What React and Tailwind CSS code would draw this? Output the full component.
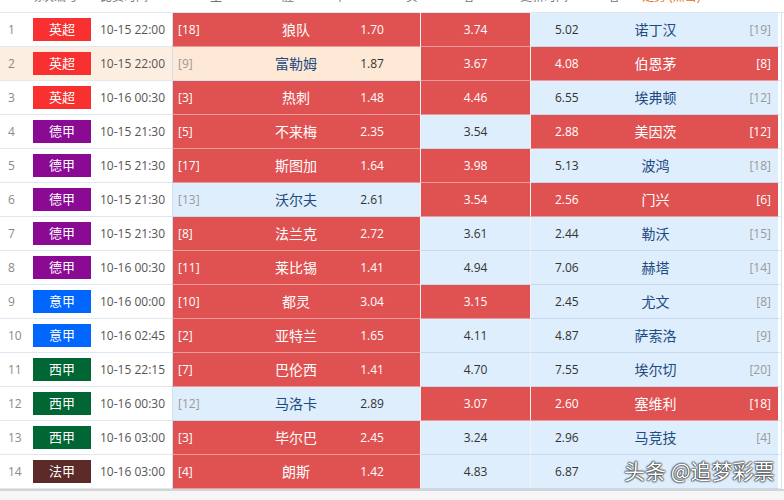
const rows = [
  { n: 1, lg: "英超", lc: "bg-[#f8302f]", t: "10-15 22:00", hr: "[18]", ht: "狼队", ho: "1.70", d: "3.74", ao: "5.02", at: "诺丁汉", ar: "[19]", c: "RRL" },
  { n: 2, lg: "英超", lc: "bg-[#f8302f]", t: "10-15 22:00", hr: "[9]", ht: "富勒姆", ho: "1.87", d: "3.67", ao: "4.08", at: "伯恩茅", ar: "[8]", c: "PRR", hover: true },
  { n: 3, lg: "英超", lc: "bg-[#f8302f]", t: "10-16 00:30", hr: "[3]", ht: "热刺", ho: "1.48", d: "4.46", ao: "6.55", at: "埃弗顿", ar: "[12]", c: "RRL" },
  { n: 4, lg: "德甲", lc: "bg-[#8a0a94]", t: "10-15 21:30", hr: "[5]", ht: "不来梅", ho: "2.35", d: "3.54", ao: "2.88", at: "美因茨", ar: "[12]", c: "RLR" },
  { n: 5, lg: "德甲", lc: "bg-[#8a0a94]", t: "10-15 21:30", hr: "[17]", ht: "斯图加", ho: "1.64", d: "3.98", ao: "5.13", at: "波鸿", ar: "[18]", c: "RRL" },
  { n: 6, lg: "德甲", lc: "bg-[#8a0a94]", t: "10-15 21:30", hr: "[13]", ht: "沃尔夫", ho: "2.61", d: "3.54", ao: "2.56", at: "门兴", ar: "[6]", c: "LRR" },
  { n: 7, lg: "德甲", lc: "bg-[#8a0a94]", t: "10-15 21:30", hr: "[8]", ht: "法兰克", ho: "2.72", d: "3.61", ao: "2.44", at: "勒沃", ar: "[15]", c: "RLL" },
  { n: 8, lg: "德甲", lc: "bg-[#8a0a94]", t: "10-16 00:30", hr: "[11]", ht: "莱比锡", ho: "1.41", d: "4.94", ao: "7.06", at: "赫塔", ar: "[14]", c: "RLL" },
  { n: 9, lg: "意甲", lc: "bg-[#0066fe]", t: "10-16 00:00", hr: "[10]", ht: "都灵", ho: "3.04", d: "3.15", ao: "2.45", at: "尤文", ar: "[8]", c: "RRL" },
  { n: 10, lg: "意甲", lc: "bg-[#0066fe]", t: "10-16 02:45", hr: "[2]", ht: "亚特兰", ho: "1.65", d: "4.11", ao: "4.87", at: "萨索洛", ar: "[9]", c: "RLL" },
  { n: 11, lg: "西甲", lc: "bg-[#006633]", t: "10-15 22:15", hr: "[7]", ht: "巴伦西", ho: "1.41", d: "4.70", ao: "7.55", at: "埃尔切", ar: "[20]", c: "RLL" },
  { n: 12, lg: "西甲", lc: "bg-[#006633]", t: "10-16 00:30", hr: "[12]", ht: "马洛卡", ho: "2.89", d: "3.07", ao: "2.60", at: "塞维利", ar: "[18]", c: "LRR" },
  { n: 13, lg: "西甲", lc: "bg-[#006633]", t: "10-16 03:00", hr: "[3]", ht: "毕尔巴", ho: "2.45", d: "3.24", ao: "2.96", at: "马竞技", ar: "[4]", c: "RLL" },
  // away team of the last row sits under the watermark
  { n: 14, lg: "法甲", lc: "bg-[#5c2b29]", t: "10-16 03:00", hr: "[4]", ht: "朗斯", ho: "1.42", d: "4.83", ao: "6.87", at: "", ar: "", c: "RLL" },
];

const font = { fontFamily: '"Open Sans", "Noto Sans CJK SC", sans-serif' };

const bgOf = (k) =>
  k === "R"
    ? "bg-[#e05252] border-[#ee9a9a]"
    : k === "P"
    ? "bg-[#fde9d6] border-[#d5e3f0]"
    : "bg-[#deeefc] border-[#c6d9ec]";

const Team = ({ red, children }) => (
  <span className={`text-[14px] ${red ? "text-white" : "text-[#1d4a80]"}`}>{children}</span>
);

const Row = ({ r }) => {
  const [h, d, a] = r.c.split("");
  const hr = h === "R";
  const dr = d === "R";
  const ar = a === "R";
  return (
    <div className="flex h-[34px] text-[12px]">
      <div
        className={`flex w-[172px] items-center border-b ${
          r.hover ? "bg-[#fdeee2] border-[#e4e9ee]" : "bg-white border-[#dde8f2]"
        }`}
      >
        <div className="w-[33px] pl-[8px] text-[#8a8a8a]">{r.n}</div>
        <div
          className={`flex h-[23px] w-[58px] items-center justify-center text-[13px] text-white ${r.lc}`}
        >
          {r.lg}
        </div>
        <div className="pl-[9px] text-[#555]">{r.t}</div>
      </div>
      <div className={`flex w-[248px] items-center border-b border-l border-l-[#cfe0f0] ${bgOf(h)}`}>
        <div className={`w-[79px] pl-[5px] ${hr ? "text-white" : "text-[#9a9a9a]"}`}>{r.hr}</div>
        <div className="w-[88px] text-center">
          <Team red={hr}>{r.ht}</Team>
        </div>
        <div className={`w-[64px] text-center ${hr ? "text-white" : "text-[#333]"}`}>{r.ho}</div>
      </div>
      <div
        className={`flex w-[110px] items-center justify-center border-b border-l border-l-[#f4f4f4] ${bgOf(d)} ${
          dr ? "text-white" : "text-[#333]"
        }`}
      >
        {r.d}
      </div>
      <div className={`flex w-[248px] items-center border-b border-l border-l-[#f4f4f4] ${bgOf(a)}`}>
        <div className={`w-[72px] text-center ${ar ? "text-white" : "text-[#333]"}`}>{r.ao}</div>
        <div className="w-[106px] text-center">
          <Team red={ar}>{r.at}</Team>
        </div>
        <div className={`w-[70px] pr-[7px] text-right ${ar ? "text-white" : "text-[#9a9a9a]"}`}>{r.ar}</div>
      </div>
      <div className="w-[3px] border-b border-[#dde8f2] bg-white" />
      <div className="w-[1px] bg-[#d6e2ec]" />
      <div className="flex-1 bg-white" />
    </div>
  );
};

export default function App() {
  return (
    <div className="relative h-[500px] w-[784px] overflow-hidden bg-white" style={font}>
      {/* header, cut off at the top of the shot */}
      <div className="h-[13px] overflow-hidden border-b border-[#dde8f2]">
        <div className="-mt-[13px] flex h-[20px] items-center text-[12px] text-[#777]">
          <span className="ml-[30px]">场次编号</span>
          <span className="ml-[22px]">比赛时间</span>
          <span className="ml-[62px]">主</span>
          <span className="ml-[60px]">胜</span>
          <span className="ml-[40px]">平</span>
          <span className="ml-[60px]">负</span>
          <span className="ml-[45px]">客</span>
          <span className="ml-[45px]">更新时间</span>
          <span className="ml-[40px]">客</span>
          <span className="ml-[22px] text-[#e8731b]">走势 (点击)</span>
        </div>
      </div>
      {rows.map((r) => (
        <Row key={r.n} r={r} />
      ))}
      <div className="h-[2px] bg-[#d4d4d4]" />
      <div className="h-[10px] bg-[#f6f6f6]" />

      <div
        className="absolute left-[624px] top-[455px] text-[21px] leading-[30px] text-white [text-shadow:0_0_2px_#222,0_0_2px_#222,0_0_1px_#000]"
        style={{ fontFamily: '"Noto Sans CJK SC", sans-serif' }}
      >
        头条 @追梦彩票
      </div>
    </div>
  );
}
